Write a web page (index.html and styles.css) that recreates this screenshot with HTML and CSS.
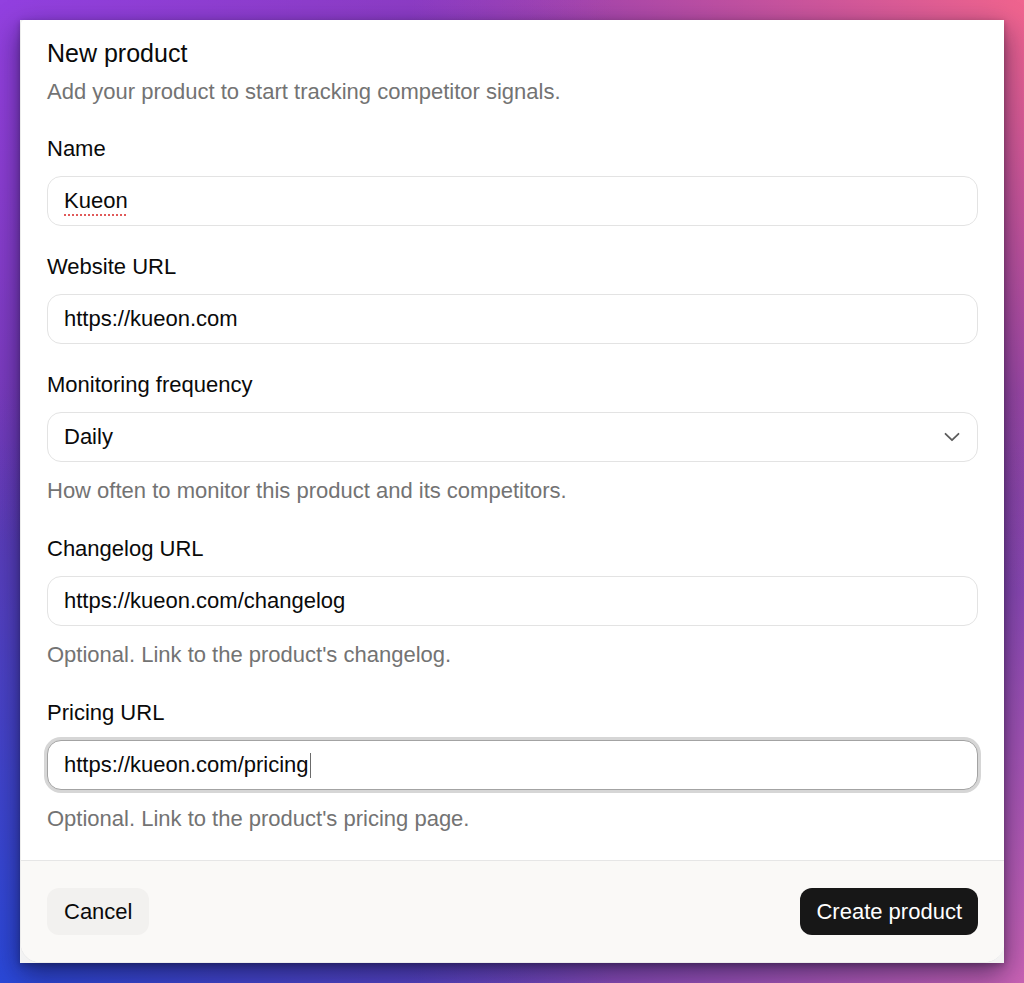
FILE: index.html
```html
<!DOCTYPE html>
<html lang="en">
<head>
<meta charset="utf-8">
<title>New product</title>
<link rel="stylesheet" href="styles.css">
</head>
<body>
<div class="frame">
  <div class="dialog">
    <div class="content">
      <h2 class="title">New product</h2>
      <p class="desc">Add your product to start tracking competitor signals.</p>

      <div class="field">
        <div class="label">Name</div>
        <div class="input"><span class="misspelled">Kueon</span></div>
      </div>

      <div class="field">
        <div class="label">Website URL</div>
        <div class="input">https://kueon.com</div>
      </div>

      <div class="field">
        <div class="label">Monitoring frequency</div>
        <div class="input select">
          <span>Daily</span>
          <svg class="chevron" width="16" height="10" viewBox="0 0 16 10" aria-hidden="true"><path d="M1.5 1.8 8 8.2l6.5-6.4" fill="none" stroke="#5c5c5c" stroke-width="1.8" stroke-linecap="round" stroke-linejoin="round"/></svg>
        </div>
        <div class="help">How often to monitor this product and its competitors.</div>
      </div>

      <div class="field">
        <div class="label">Changelog URL</div>
        <div class="input">https://kueon.com/changelog</div>
        <div class="help">Optional. Link to the product's changelog.</div>
      </div>

      <div class="field">
        <div class="label">Pricing URL</div>
        <div class="input focused">https://kueon.com/pricing<span class="caret"></span></div>
        <div class="help">Optional. Link to the product's pricing page.</div>
      </div>
    </div>
    <div class="footer">
      <button class="btn btn-ghost">Cancel</button>
      <button class="btn btn-primary">Create product</button>
    </div>
  </div>
</div>
</body>
</html>
```

FILE: styles.css
```css
* { box-sizing: border-box; }

html, body {
  margin: 0;
  padding: 0;
}

body {
  width: 1024px;
  height: 983px;
  overflow: hidden;
  font-family: "Liberation Sans", Arial, sans-serif;
  color: #0a0a0a;
  background:
    radial-gradient(ellipse 60% 55% at 0% 0%, #9240e0 0%, rgba(146,64,224,0) 100%),
    radial-gradient(ellipse 60% 60% at 100% 0%, #f0648e 0%, rgba(240,100,142,0) 100%),
    radial-gradient(ellipse 60% 60% at 0% 100%, #2a48d8 0%, rgba(42,72,216,0) 100%),
    radial-gradient(ellipse 60% 60% at 100% 100%, #c862b4 0%, rgba(200,98,180,0) 100%),
    linear-gradient(180deg, #8a3ab8 0%, #6a3ab0 50%, #6a40b8 100%);
}

.frame {
  margin: 20px 20px 0 20px;
  width: 984px;
  height: 943px;
  background: #f3f3f3;
  box-shadow: 0 10px 26px rgba(10, 10, 40, 0.55), 0 2px 6px rgba(0,0,0,0.25);
}

.dialog {
  height: 100%;
  display: flex;
  flex-direction: column;
  background: #ffffff;
  border-radius: 4px 0 20px 20px;
  border: 1px solid #ececec;
  border-top: none;
  border-right: none;
  overflow: hidden;
}

.content {
  flex: 1;
  padding: 18px 26px 0 26px;
}

.title {
  margin: 0;
  font-size: 25px;
  line-height: 30px;
  font-weight: normal;
  color: #0a0a0a;
}

.desc {
  margin: 10px 0 0 0;
  font-size: 22px;
  line-height: 28px;
  color: #737373;
}

.field {
  display: flex;
  flex-direction: column;
  margin-top: 26px;
}

.desc + .field {
  margin-top: 28px;
}

.label {
  font-size: 22px;
  line-height: 28px;
  padding-top: 1px;
  color: #0a0a0a;
  margin-bottom: 13px;
}

.input {
  height: 50px;
  border: 1px solid #e3e3e3;
  border-radius: 14px;
  padding: 0 16px;
  display: flex;
  align-items: center;
  font-size: 22px;
  color: #0a0a0a;
  background: #fff;
}

.misspelled {
  text-decoration: underline dotted #e05a5a;
  text-decoration-thickness: 2px;
  text-underline-offset: 6px;
}

.select {
  justify-content: space-between;
  padding-right: 17px;
}

.chevron {
  display: block;
}

.focused {
  border-color: #a3a3a3;
  box-shadow: 0 0 0 3px #d6d6d6;
}

.caret {
  display: inline-block;
  width: 1px;
  height: 25px;
  background: #6b6b6b;
  margin-left: 1px;
}

.help {
  margin-top: 14px;
  padding-top: 1px;
  margin-bottom: 3px;
  font-size: 22px;
  line-height: 28px;
  color: #737373;
}

.footer {
  height: 102px;
  flex: none;
  border-top: 1px solid #e6e6e6;
  background: #faf9f7;
  padding: 0 26px 0 26px;
  display: flex;
  align-items: center;
  justify-content: space-between;
}

.btn {
  height: 47px;
  border: none;
  border-radius: 12px;
  font-family: "Liberation Sans", Arial, sans-serif;
  font-size: 22px;
  padding: 0 16px;
  white-space: nowrap;
  cursor: pointer;
}

.btn-ghost {
  background: #f2f1ef;
  color: #0a0a0a;
  padding: 0 17px;
}

.btn-primary {
  background: #171717;
  color: #ffffff;
}
```
